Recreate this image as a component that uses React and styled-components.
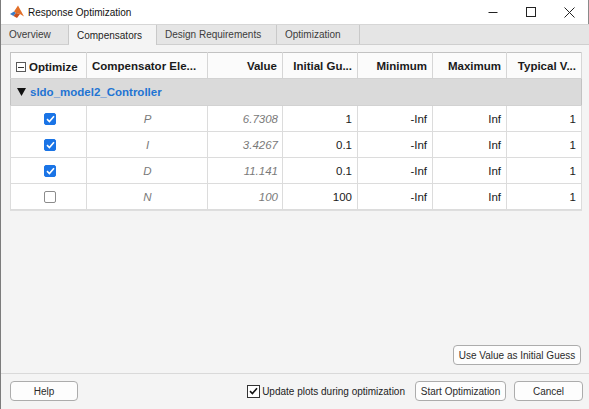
import React from "react";
import styled, { createGlobalStyle } from "styled-components";

const GlobalStyle = createGlobalStyle`
  html, body {
    margin: 0;
    padding: 0;
    background: #f4f4f4;
  }
  body {
    font-family: "Liberation Sans", Arial, sans-serif;
  }
`;

const columns = [
  { label: "Optimize", width: 76, align: "left" },
  { label: "Compensator Ele...", width: 121, align: "left" },
  { label: "Value", width: 75, align: "right" },
  { label: "Initial Gu...", width: 75, align: "right" },
  { label: "Minimum", width: 75, align: "right" },
  { label: "Maximum", width: 74, align: "right" },
  { label: "Typical V...", width: 75, align: "right" },
];

const rows = [
  { on: true, name: "P", value: "6.7308", guess: "1" },
  { on: true, name: "I", value: "3.4267", guess: "0.1" },
  { on: true, name: "D", value: "11.141", guess: "0.1" },
  { on: false, name: "N", value: "100", guess: "100" },
];

const tabs = [
  { label: "Overview", width: 68 },
  { label: "Compensators", width: 88, active: true },
  { label: "Design Requirements", width: 120 },
  { label: "Optimization", width: 83 },
];

const Window = styled.div`
  width: 589px;
  height: 409px;
  display: flex;
  flex-direction: column;
  box-sizing: border-box;
  border-left: 1px solid #7c7c7c;
  background: #f4f4f4;
  overflow: hidden;
`;

const TitleBar = styled.div`
  height: 24px;
  display: flex;
  align-items: center;
  background: #fff;
  border-right: 1px solid #8a8a8a;
  flex-shrink: 0;
`;

const AppIcon = styled.div`
  width: 16px;
  height: 16px;
  margin: 0 3px 0 8px;
  display: flex;
`;

const Title = styled.span`
  flex: 1;
  font-size: 10px;
  color: #111;
`;

const Control = styled.div`
  width: 38px;
  height: 24px;
  display: flex;
  align-items: center;
  justify-content: center;
`;

const TabBar = styled.div`
  height: 21px;
  box-sizing: border-box;
  display: flex;
  background: #e5e5e5;
  border-top: 1px solid #d6d6d6;
  border-bottom: 1px solid #cfcfcf;
  flex-shrink: 0;
`;

const Tab = styled.div`
  width: ${(p) => p.$width}px;
  box-sizing: border-box;
  padding-left: 8px;
  display: flex;
  align-items: center;
  font-size: 10px;
  color: ${(p) => (p.$active ? "#1e1e1e" : "#3c3c3c")};
  background: ${(p) => (p.$active ? "#f4f4f4" : "transparent")};
  border-right: 1px solid #c9c9c9;
  margin-bottom: ${(p) => (p.$active ? "-1px" : "0")};
  white-space: nowrap;
`;

const Content = styled.div`
  flex: 1;
  display: flex;
  flex-direction: column;
  padding: 7px 8px 8px 9px;
`;

const Grid = styled.table`
  width: 571px;
  border-collapse: collapse;
  table-layout: fixed;
  background: #fff;
  border: 1px solid #c2c2c2;
  box-shadow: 0 1px 0 #dedede;
  font-size: 11.5px;
`;

const HeadCell = styled.th`
  height: 25px;
  padding: 0 5px;
  background: #fbfbfb;
  border-right: 1px solid #d6d6d6;
  border-bottom: 1px solid #d2d2d2;
  font-weight: bold;
  color: #1a1a1a;
  text-align: ${(p) => p.$align};
  white-space: nowrap;
  overflow: hidden;
`;

const HeadInner = styled.span`
  display: inline-flex;
  align-items: center;
  gap: 3px;
`;

const Collapse = styled.span`
  width: 8px;
  height: 8px;
  border: 1px solid #5a5a5a;
  display: inline-flex;
  align-items: center;
  justify-content: center;
  background: #fff;
  &::after {
    content: "";
    width: 6px;
    height: 1px;
    background: #333;
  }
`;

const GroupCell = styled.td`
  height: 26px;
  padding: 0 0 0 6px;
  background: #dadada;
  border-bottom: 1px solid #d2d2d2;
`;

const GroupLabel = styled.span`
  display: inline-flex;
  align-items: center;
  gap: 4px;
  font-weight: bold;
  color: #1f74d3;
`;

const Cell = styled.td`
  height: 25px;
  padding: 0 ${(p) => (p.$italic ? "4px" : "5px")} 0 5px;
  border: 1px solid #dcdcdc;
  text-align: ${(p) => p.$align};
  color: ${(p) => (p.$italic ? "#7a7a7a" : "#1a1a1a")};
  font-style: ${(p) => (p.$italic ? "italic" : "normal")};
  white-space: nowrap;
`;

const CheckCell = styled(Cell)`
  text-align: center;
  padding-left: 8px;
`;

const Check = styled.span`
  display: inline-flex;
  align-items: center;
  justify-content: center;
  width: 12px;
  height: 12px;
  box-sizing: border-box;
  border-radius: 2px;
  vertical-align: middle;
  background: ${(p) => (p.$on ? "#1a74e6" : "#fff")};
  border: 1px solid ${(p) => (p.$on ? "#1a74e6" : "#8c8c8c")};
`;

const Spacer = styled.div`
  flex: 1;
`;

const ActionRow = styled.div`
  display: flex;
  justify-content: flex-end;
`;

const Button = styled.button`
  height: 20px;
  width: ${(p) => (p.$width ? `${p.$width}px` : "auto")};
  padding: 0 4px;
  box-sizing: border-box;
  border: 1px solid #acacac;
  border-radius: 4px;
  background: #fdfdfd;
  color: #2a2a2a;
  font-family: "Liberation Sans", Arial, sans-serif;
  font-size: 10px;
  white-space: nowrap;
`;

const Footer = styled.div`
  height: 36px;
  box-sizing: border-box;
  flex-shrink: 0;
  display: flex;
  align-items: center;
  padding: 0 6px 1px 9px;
  border-top: 1px solid #d9d9d9;
`;

const FooterRight = styled.div`
  margin-left: auto;
  display: flex;
  align-items: center;
  gap: 8px;
`;

const UpdateLabel = styled.label`
  display: flex;
  align-items: center;
  gap: 2px;
  font-size: 10px;
  color: #222;
  margin-right: 2px;
`;

const Box = styled.span`
  width: 13px;
  height: 13px;
  box-sizing: border-box;
  border: 1px solid #333;
  background: #fff;
  display: inline-flex;
  align-items: center;
  justify-content: center;
`;

const MatlabLogo = () => (
  <svg width="16" height="16" viewBox="0 0 16 16">
    <path d="M1 10 L5 7.5 L7 9 L4.5 12 Z" fill="#3a7cc8" />
    <path d="M5 7.5 L9 1.5 L12 7 L15 12.5 L11 10 L7 9 Z" fill="#e2702a" />
    <path d="M9 1.5 L12 7 L15 12.5 L12.5 8 Z" fill="#b8401a" />
    <path d="M4.5 12 L7 9 L11 10 L8 14 Z" fill="#c9501c" />
  </svg>
);

const Tick = ({ color }) => (
  <svg width="9" height="8" viewBox="0 0 9 8">
    <path d="M1 4.2 L3.4 6.5 L8 1.2" stroke={color} strokeWidth="1.6" fill="none" />
  </svg>
);

const App = () => {
  return (
    <>
      <GlobalStyle />
      <Window>
        <TitleBar>
          <AppIcon>
            <MatlabLogo />
          </AppIcon>
          <Title>Response Optimization</Title>
          <Control>
            <svg width="10" height="10" viewBox="0 0 10 10">
              <path d="M0.5 5.5 H9.5" stroke="#222" strokeWidth="1" />
            </svg>
          </Control>
          <Control>
            <svg width="10" height="10" viewBox="0 0 10 10">
              <rect x="0.5" y="0.5" width="9" height="9" stroke="#222" fill="none" />
            </svg>
          </Control>
          <Control>
            <svg width="11" height="11" viewBox="0 0 11 11">
              <path d="M0.5 0.5 L10.5 10.5 M10.5 0.5 L0.5 10.5" stroke="#222" strokeWidth="1" />
            </svg>
          </Control>
        </TitleBar>

        <TabBar>
          {tabs.map((t) => (
            <Tab key={t.label} $width={t.width} $active={t.active}>
              {t.label}
            </Tab>
          ))}
        </TabBar>

        <Content>
          <Grid>
            <colgroup>
              {columns.map((c) => (
                <col key={c.label} style={{ width: c.width }} />
              ))}
            </colgroup>
            <thead>
              <tr>
                {columns.map((c, idx) => (
                  <HeadCell key={c.label} $align={c.align}>
                    {idx === 0 ? (
                      <HeadInner>
                        <Collapse />
                        {c.label}
                      </HeadInner>
                    ) : (
                      c.label
                    )}
                  </HeadCell>
                ))}
              </tr>
            </thead>
            <tbody>
              <tr>
                <GroupCell colSpan={7}>
                  <GroupLabel>
                    <svg width="9" height="9" viewBox="0 0 9 9">
                      <path d="M0 1 H9 L4.5 9 Z" fill="#111" />
                    </svg>
                    sldo_model2_Controller
                  </GroupLabel>
                </GroupCell>
              </tr>
              {rows.map((r) => (
                <tr key={r.name}>
                  <CheckCell>
                    <Check $on={r.on}>{r.on && <Tick color="#fff" />}</Check>
                  </CheckCell>
                  <Cell $align="center" $italic>
                    {r.name}
                  </Cell>
                  <Cell $align="right" $italic>
                    {r.value}
                  </Cell>
                  <Cell $align="right">{r.guess}</Cell>
                  <Cell $align="right">-Inf</Cell>
                  <Cell $align="right">Inf</Cell>
                  <Cell $align="right">1</Cell>
                </tr>
              ))}
            </tbody>
          </Grid>
          <Spacer />
          <ActionRow>
            <Button $width={128}>Use Value as Initial Guess</Button>
          </ActionRow>
        </Content>

        <Footer>
          <Button $width={68}>Help</Button>
          <FooterRight>
            <UpdateLabel>
              <Box>
                <Tick color="#111" />
              </Box>
              Update plots during optimization
            </UpdateLabel>
            <Button $width={91}>Start Optimization</Button>
            <Button $width={69}>Cancel</Button>
          </FooterRight>
        </Footer>
      </Window>
    </>
  );
};

export default App;
